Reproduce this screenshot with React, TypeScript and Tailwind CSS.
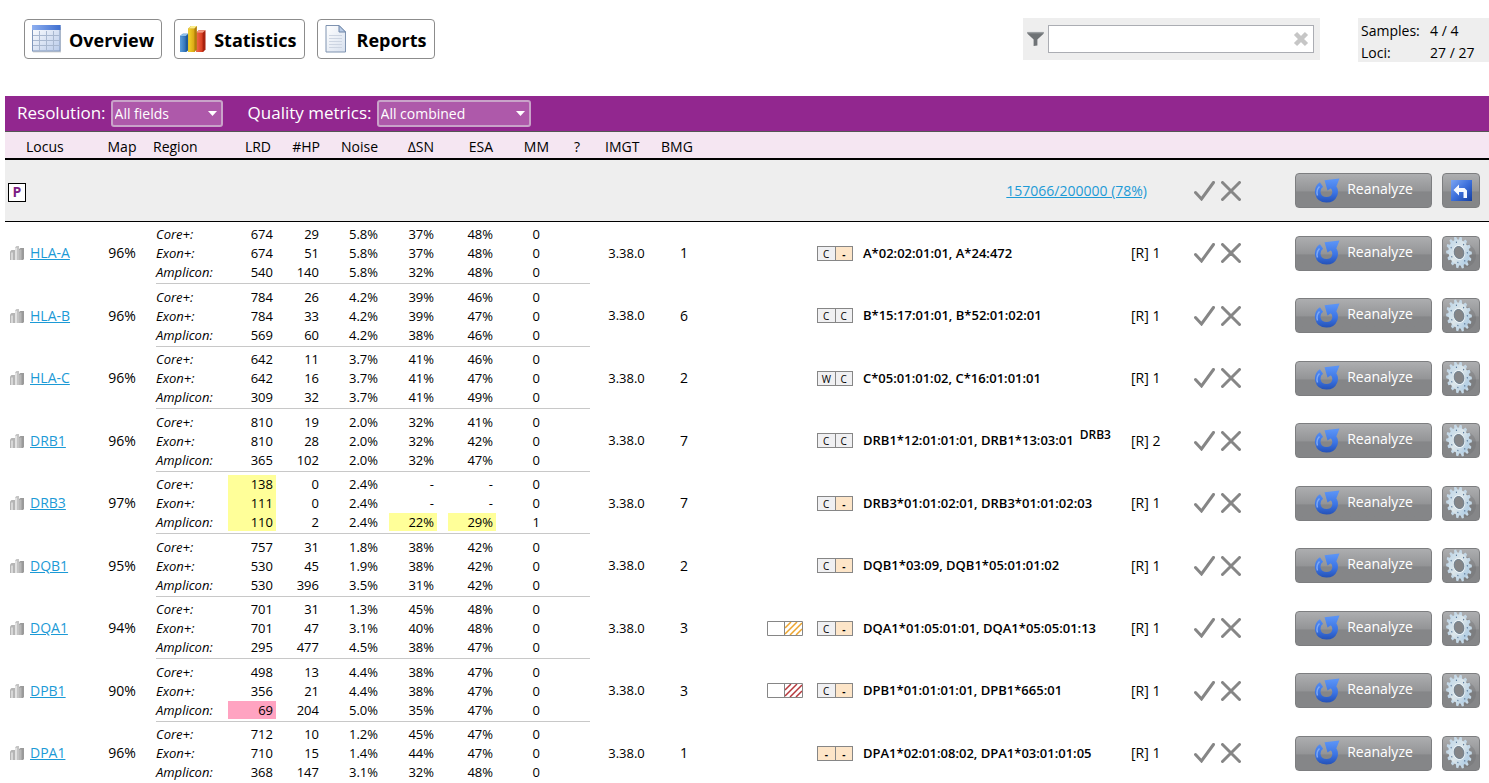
import React, { useState } from 'react';
import clsx from 'clsx';

type Flag = 'none' | 'warn' | 'fail';

interface Locus {
  name: string;
  map: string;
  lrd: string[];
  hp: string[];
  noise: string[];
  sn: string[];
  esa: string[];
  mm: string[];
  bmg: number;
  hatch?: 'orange' | 'red';
  badges: string[];
  genotype: string;
  extra?: string;
  results: number;
  flags?: { lrd?: Flag[]; sn?: Flag[]; esa?: Flag[] };
}

const REGIONS = ['Core+:', 'Exon+:', 'Amplicon:'];

const LOCI: Locus[] = [
  {
    name: 'HLA-A', map: '96%', lrd: ['674', '674', '540'], hp: ['29', '51', '140'], noise: ['5.8%', '5.8%', '5.8%'],
    sn: ['37%', '37%', '32%'], esa: ['48%', '48%', '48%'], mm: ['0', '0', '0'], bmg: 1,
    badges: ['C', '-'], genotype: 'A*02:02:01:01, A*24:472', results: 1,
  },
  {
    name: 'HLA-B', map: '96%', lrd: ['784', '784', '569'], hp: ['26', '33', '60'], noise: ['4.2%', '4.2%', '4.2%'],
    sn: ['39%', '39%', '38%'], esa: ['46%', '47%', '46%'], mm: ['0', '0', '0'], bmg: 6,
    badges: ['C', 'C'], genotype: 'B*15:17:01:01, B*52:01:02:01', results: 1,
  },
  {
    name: 'HLA-C', map: '96%', lrd: ['642', '642', '309'], hp: ['11', '16', '32'], noise: ['3.7%', '3.7%', '3.7%'],
    sn: ['41%', '41%', '41%'], esa: ['46%', '47%', '49%'], mm: ['0', '0', '0'], bmg: 2,
    badges: ['W', 'C'], genotype: 'C*05:01:01:02, C*16:01:01:01', results: 1,
  },
  {
    name: 'DRB1', map: '96%', lrd: ['810', '810', '365'], hp: ['19', '28', '102'], noise: ['2.0%', '2.0%', '2.0%'],
    sn: ['32%', '32%', '32%'], esa: ['41%', '42%', '47%'], mm: ['0', '0', '0'], bmg: 7,
    badges: ['C', 'C'], genotype: 'DRB1*12:01:01:01, DRB1*13:03:01', extra: 'DRB3', results: 2,
  },
  {
    name: 'DRB3', map: '97%', lrd: ['138', '111', '110'], hp: ['0', '0', '2'], noise: ['2.4%', '2.4%', '2.4%'],
    sn: ['-', '-', '22%'], esa: ['-', '-', '29%'], mm: ['0', '0', '1'], bmg: 7,
    badges: ['C', '-'], genotype: 'DRB3*01:01:02:01, DRB3*01:01:02:03', results: 1,
    flags: { lrd: ['warn', 'warn', 'warn'], sn: ['none', 'none', 'warn'], esa: ['none', 'none', 'warn'] },
  },
  {
    name: 'DQB1', map: '95%', lrd: ['757', '530', '530'], hp: ['31', '45', '396'], noise: ['1.8%', '1.9%', '3.5%'],
    sn: ['38%', '38%', '31%'], esa: ['42%', '42%', '42%'], mm: ['0', '0', '0'], bmg: 2,
    badges: ['C', '-'], genotype: 'DQB1*03:09, DQB1*05:01:01:02', results: 1,
  },
  {
    name: 'DQA1', map: '94%', lrd: ['701', '701', '295'], hp: ['31', '47', '477'], noise: ['1.3%', '3.1%', '4.5%'],
    sn: ['45%', '40%', '38%'], esa: ['48%', '48%', '47%'], mm: ['0', '0', '0'], bmg: 3, hatch: 'orange',
    badges: ['C', '-'], genotype: 'DQA1*01:05:01:01, DQA1*05:05:01:13', results: 1,
  },
  {
    name: 'DPB1', map: '90%', lrd: ['498', '356', '69'], hp: ['13', '21', '204'], noise: ['4.4%', '4.4%', '5.0%'],
    sn: ['38%', '38%', '35%'], esa: ['47%', '47%', '47%'], mm: ['0', '0', '0'], bmg: 3, hatch: 'red',
    badges: ['C', '-'], genotype: 'DPB1*01:01:01:01, DPB1*665:01', results: 1,
    flags: { lrd: ['none', 'none', 'fail'] },
  },
  {
    name: 'DPA1', map: '96%', lrd: ['712', '710', '368'], hp: ['10', '15', '147'], noise: ['1.2%', '1.4%', '3.1%'],
    sn: ['45%', '44%', '32%'], esa: ['47%', '47%', '48%'], mm: ['0', '0', '0'], bmg: 1,
    badges: ['-', '-'], genotype: 'DPA1*02:01:08:02, DPA1*03:01:01:05', results: 1,
  },
];

/* ---------- icons ---------- */

const GridIcon = () => (
  <svg width="31" height="28" viewBox="-2 0 31 28">
    <defs>
      <linearGradient id="gridHead" x1="0" y1="0" x2="1" y2="0">
        <stop offset="0" stopColor="#8fb0f0" />
        <stop offset="1" stopColor="#3f6fd0" />
      </linearGradient>
      <linearGradient id="gridBody" x1="0" y1="0" x2="1" y2="1">
        <stop offset="0" stopColor="#fff" />
        <stop offset="1" stopColor="#b9cbea" />
      </linearGradient>
    </defs>
    <rect x="1" y="2" width="28" height="25.500" fill="#d5d5d5" />
    <rect x=".5" y=".5" width="27.500" height="25.500" fill="url(#gridBody)" stroke="#7f97bd" />
    <rect x="0" y="0" width="28.500" height="5" fill="url(#gridHead)" />
    <path d="M7.500 6v20M14.500 6v20M21.500 6v20M1 10.500h27M1 15.500h27M1 20.500h27" stroke="#a9b8d0" fill="none" />
  </svg>
);

const ChartIcon = () => (
  <svg width="26" height="28" viewBox="0 0 27 28">
    <defs>
      <linearGradient id="barBlue" x1="0" x2="1">
        <stop offset="0" stopColor="#5ea0dc" />
        <stop offset="1" stopColor="#2f6fb4" />
      </linearGradient>
      <linearGradient id="barGold" x1="0" x2="1">
        <stop offset="0" stopColor="#f3d62c" />
        <stop offset="1" stopColor="#d9a413" />
      </linearGradient>
      <linearGradient id="barRed" x1="0" x2="1">
        <stop offset="0" stopColor="#f0694a" />
        <stop offset="1" stopColor="#d63a1c" />
      </linearGradient>
    </defs>
    <path d="M0 11l3-2.500h6v17l-2.500 2H0z" fill="#235b99" />
    <path d="M0 11h6v16.500H0z" fill="url(#barBlue)" />
    <path d="M0 11l3-2.500h5.500L6 11z" fill="#8cc0ec" />
    <path d="M17 7.500L19.500 5h7v20L24 27.500h-7z" fill="#a8220e" />
    <path d="M17 7.500h6.500v20H17z" fill="url(#barRed)" />
    <path d="M17 7.500L19.500 5h7l-3 2.500z" fill="#f79a80" />
    <path d="M8.500 3L11.500.500h6V25L15 27.500H8.500z" fill="#b07f0b" />
    <path d="M8.500 3H15v24.500H8.500z" fill="url(#barGold)" />
    <path d="M8.500 3L11.500.500h6L15 3z" fill="#fbee8a" />
  </svg>
);

const DocumentIcon = () => (
  <svg width="26" height="28" viewBox="-2 0 26 28">
    <defs>
      <linearGradient id="docBody" x1="0" y1="0" x2="1" y2="1">
        <stop offset="0" stopColor="#fff" />
        <stop offset="1" stopColor="#d7e0ee" />
      </linearGradient>
    </defs>
    <path d="M1 .500h13l6.500 6.500v20H1z" fill="url(#docBody)" stroke="#7f93b0" />
    <path d="M14 .500V7h6.500z" fill="#b9cbe6" stroke="#6f86a8" />
    <path d="M4 10.500h13M4 13.500h13M4 16.500h13M4 19.500h13M4 22.500h13" stroke="#cdd5e2" />
  </svg>
);

const FunnelIcon = () => (
  <svg width="17" height="16" viewBox="0 0 18 16">
    <path d="M.500.500h17v2l-6.500 6V15l-4 .500v-7l-6.500-6z" fill="#6f7376" />
    <path d="M.500.500h17v1.500H.500z" fill="#9a9ea1" />
  </svg>
);

const ClearIcon = () => (
  <svg width="16" height="16" viewBox="0 0 16 16">
    <path d="M2.500 2.500l11 11M13.500 2.500l-11 11" stroke="#c6c6c6" strokeWidth="4.500" />
  </svg>
);

const SmallBarsIcon = () => (
  <svg width="14" height="14" viewBox="0 0 14 14" className="shrink-0">
    <path d="M0 5.500L1.500 4H5v10H0z" fill="#b5b5b5" />
    <path d="M1 6.500h2V14H1z" fill="#d8d8d8" />
    <path d="M9 3l1.500-1H14v11l-1 1H9z" fill="#9a9a9a" />
    <path d="M9 3.500h2.500V14H9z" fill="#b8b8b8" />
    <path d="M5 1.500L6.500 0H9v14H5z" fill="#c4c4c4" />
    <path d="M5 2h2v12H5z" fill="#e2e2e2" />
  </svg>
);

const CheckIcon = () => (
  <svg width="21" height="20" viewBox="0 0 21 20">
    <path d="M1.500 11.500L7.500 18 19.500 1.500" fill="none" stroke="#868686" strokeWidth="3" strokeLinecap="round" />
  </svg>
);

const CrossIcon = () => (
  <svg width="20" height="20" viewBox="0 0 20 20">
    <path d="M1.500 1.500l17 17M18.500 1.500l-17 17" stroke="#868686" strokeWidth="3" strokeLinecap="round" />
  </svg>
);

const ReloadIcon = () => (
  <svg width="26" height="26" viewBox="0 0 26 26">
    <defs>
      <linearGradient id="reload" gradientUnits="userSpaceOnUse" x1="0" y1="2" x2="0" y2="25">
        <stop offset="0" stopColor="#5a93f5" />
        <stop offset=".55" stopColor="#3b74e4" />
        <stop offset="1" stopColor="#2450b4" />
      </linearGradient>
    </defs>
    <path d="M7.500 6.500C1.500 10.500 2.500 21.500 12.500 21.800C21 21.800 23.500 13 18.500 8" fill="none" stroke="url(#reload)" strokeWidth="5.600" />
    <path d="M10.500 2.200L25.500.500 22.500 8 18 9.500 13.500 12.500z" fill="url(#reload)" />
    <path d="M5.500 8.500C3 11 2.500 14.500 3.500 17.500" fill="none" stroke="#7fa9f3" strokeWidth="1.500" />
  </svg>
);

const BackIcon = () => (
  <svg width="21" height="21" viewBox="0 0 21 21">
    <defs>
      <linearGradient id="back" x1="0" y1="0" x2="1" y2="1">
        <stop offset="0" stopColor="#7ba5f2" />
        <stop offset=".5" stopColor="#3c6fdb" />
        <stop offset="1" stopColor="#153f9f" />
      </linearGradient>
    </defs>
    <rect width="21" height="21" fill="url(#back)" />
    <path d="M2.500 10L8 4.500v3.500h5.500l2.500 2.500V18h-3.500v-6H8v3.500z" fill="#f4f8ff" />
  </svg>
);

const TEETH = Array.from({ length: 14 }, (_, i) => (i * 360) / 14);

const GearIcon = () => (
  <svg width="34" height="34" viewBox="0 0 34 34">
    <defs>
      <linearGradient id="gear" gradientUnits="userSpaceOnUse" x1="-10" y1="-12" x2="10" y2="14">
        <stop offset="0" stopColor="#c3d9e9" />
        <stop offset=".45" stopColor="#dce6ea" />
        <stop offset="1" stopColor="#a5c6e2" />
      </linearGradient>
    </defs>
    <ellipse cx="20" cy="19.500" rx="12" ry="12" fill="#6d6e70" opacity=".35" />
    <g transform="translate(15 16.500) rotate(-14) scale(.78 1)">
      {TEETH.map(a => (
        <path key={a} d="M-2.300-12L-1.300-16.200h2.600L2.300-12z" fill="#c4d8e7" transform={`rotate(${a})`} />
      ))}
      <circle r="10" fill="none" stroke="url(#gear)" strokeWidth="6.500" />
      <circle r="7" fill="none" stroke="#eef4f7" strokeWidth="1.200" />
      <circle r="6.200" fill="#848587" stroke="#6e8496" strokeWidth=".8" />
      {TEETH.filter((_, i) => i % 2 === 0).map(a => (
        <circle key={a} cy="-10.500" r=".8" fill="#58789a" transform={`rotate(${a})`} />
      ))}
    </g>
  </svg>
);

/* ---------- small parts ---------- */

const TabButton: React.FC<{ icon: React.ReactNode; children: React.ReactNode }> = ({ icon, children }) => (
  <button
    type="button"
    className="flex h-10 items-center gap-2 rounded-[4px] border border-[#8c8c8c] bg-white pl-[5px] pr-[7px] text-lg font-bold"
  >
    {icon}
    <span className="pt-[2px]">{children}</span>
  </button>
);

interface PickerProps {
  id: string;
  label: string;
  options: string[];
  width: string;
}

const Picker: React.FC<PickerProps> = ({ id, label, options, width }) => (
  <div className="flex items-center gap-[5px]">
    <label htmlFor={id} className="text-[17px] text-white">{label}</label>
    <div className={clsx('relative', width)}>
      <select
        id={id}
        className="h-[27px] w-full appearance-none rounded-[3px] border-2 border-[#c9a3c9] bg-[#ae59aa] pl-[2px] text-sm text-white outline-none"
      >
        {options.map(o => <option key={o}>{o}</option>)}
      </select>
      <svg width="9" height="5" viewBox="0 0 9 5" className="pointer-events-none absolute right-[6px] top-[11px]">
        <path d="M0 0h9L4.500 5z" fill="#fff" />
      </svg>
    </div>
  </div>
);

const ReanalyzeButton = () => (
  <button
    type="button"
    className="flex h-[35px] w-[137px] items-center justify-center gap-[7px] rounded-[4px] border border-[#7d7e80] bg-linear-to-b from-[#adaeb0] from-0% via-[#949597] via-50% to-[#858688] to-55% text-sm text-white"
  >
    <ReloadIcon />
    <span className="pb-[3px]">Reanalyze</span>
  </button>
);

const SquareButton: React.FC<{ label: string; children: React.ReactNode }> = ({ label, children }) => (
  <button
    type="button"
    aria-label={label}
    className="flex h-[35px] w-[38px] items-center justify-center overflow-hidden rounded-[4px] border border-[#7d7e80] bg-linear-to-b from-[#adaeb0] from-0% via-[#949597] via-50% to-[#858688] to-55%"
  >
    {children}
  </button>
);

const Decision = () => (
  <div className="flex items-center gap-[6px]">
    <button type="button" aria-label="Accept"><CheckIcon /></button>
    <button type="button" aria-label="Reject"><CrossIcon /></button>
  </div>
);

const Badges: React.FC<{ values: string[] }> = ({ values }) => (
  <div className="flex h-[15px] w-9 divide-x divide-[#868686] border border-[#868686] text-[10px] leading-[14px]">
    {values.map((v, i) => (
      <span
        key={i}
        className={clsx('flex-1 text-center', v === '-' ? 'bg-[#fde5c8] font-bold' : 'bg-[#f0f0f2]')}
      >
        {v}
      </span>
    ))}
  </div>
);

const Hatch: React.FC<{ color: 'orange' | 'red' }> = ({ color }) => (
  <svg width="36" height="15" viewBox="0 0 36 15">
    <path
      d="M18 7l6-6M18 13L30 1M23 14L35 2M29 14l6-6"
      stroke={color === 'orange' ? '#eda52f' : '#b7393d'}
      strokeWidth="1.500"
    />
    <path d="M.500.500h35v14H.500zM17.500.500v14" fill="none" stroke="#868686" />
  </svg>
);

interface StackProps {
  values: string[];
  flags?: Flag[];
  className?: string;
}

// Three stacked values, one for each region
const Stack: React.FC<StackProps> = ({ values, flags, className }) => (
  <div className="border-b border-[#c8c8c8] pb-[2px] text-[13px] leading-[19px]">
    {values.map((v, i) => (
      <div
        key={i}
        className={clsx(
          'ml-auto h-[19px] last:h-[18px]',
          className ?? 'w-12 pr-[3px] text-right',
          flags?.[i] === 'warn' && 'bg-[#ffff99]',
          flags?.[i] === 'fail' && 'bg-[#ffa3c1]',
        )}
      >
        {v}
      </div>
    ))}
  </div>
);

const LocusRow: React.FC<{ locus: Locus }> = ({ locus }) => (
  <tr className="h-[62px] even:h-[63px]">
    <td>
      <div className="flex items-center gap-[6px] pl-[5px]">
        <SmallBarsIcon />
        <a href="#" className="text-[#1c9ad6] underline">{locus.name}</a>
      </div>
    </td>
    <td className="text-center">{locus.map}</td>
    <td className="pl-1 align-bottom italic"><Stack values={REGIONS} className="w-full" /></td>
    <td className="align-bottom"><Stack values={locus.lrd} flags={locus.flags?.lrd} /></td>
    <td className="align-bottom"><Stack values={locus.hp} /></td>
    <td className="align-bottom"><Stack values={locus.noise} /></td>
    <td className="align-bottom"><Stack values={locus.sn} flags={locus.flags?.sn} /></td>
    <td className="align-bottom"><Stack values={locus.esa} flags={locus.flags?.esa} /></td>
    <td className="align-bottom"><Stack values={locus.mm} className="pr-[10px] text-right" /></td>
    <td className="align-bottom"><div className="border-b border-[#c8c8c8]" /></td>
    <td className="pl-[5px] text-center text-[13px]">3.38.0</td>
    <td className="text-center">{locus.bmg}</td>
    <td>
      <div className="flex justify-end gap-[14px] pr-[10px]">
        {locus.hatch && <Hatch color={locus.hatch} />}
        <Badges values={locus.badges} />
      </div>
    </td>
    <td className="whitespace-nowrap text-[13px] font-semibold">
      {locus.genotype}
      {locus.extra && <sup className="ml-[6px] text-xs">{locus.extra}</sup>}
    </td>
    <td>[R] {locus.results}</td>
    <td><Decision /></td>
    <td><ReanalyzeButton /></td>
    <td><SquareButton label={`${locus.name} settings`}><GearIcon /></SquareButton></td>
  </tr>
);

const App: React.FC = () => {
  const [filter, setFilter] = useState('');

  return (
    <div className="min-h-screen bg-white font-['Open_Sans','Noto_Sans',sans-serif] text-sm text-black">
      <header className="flex h-24 items-start pl-6 pt-[18px]">
        <nav className="flex gap-3 pt-[1px]">
          <TabButton icon={<GridIcon />}>Overview</TabButton>
          <TabButton icon={<ChartIcon />}>Statistics</TabButton>
          <TabButton icon={<DocumentIcon />}>Reports</TabButton>
        </nav>

        <div className="ml-auto mr-[38px] flex h-[42px] w-[297px] items-center gap-1 bg-[#eee] pl-1 pr-[6px]">
          <FunnelIcon />
          <div className="relative flex-1">
            <input
              type="text"
              aria-label="Filter"
              value={filter}
              onChange={e => setFilter(e.target.value)}
              className="block h-7 w-full border border-[#abadb3] bg-white pl-1 pr-7 outline-none"
            />
            <button type="button" aria-label="Clear filter" onClick={() => setFilter('')} className="absolute right-[5px] top-[6px]">
              <ClearIcon />
            </button>
          </div>
        </div>

        <dl className="grid h-11 w-[131px] grid-cols-[69px_1fr] bg-[#eee] pl-[3px] pt-[2px] leading-[22px]">
          <dt>Samples:</dt>
          <dd>4 / 4</dd>
          <dt>Loci:</dt>
          <dd>27 / 27</dd>
        </dl>
      </header>

      <main className="ml-[5px]">
        <div className="flex h-9 items-center gap-[25px] border-b border-[#555] bg-[#92278f] pl-3">
          <Picker id="resolution" label="Resolution:" options={['All fields', 'Two fields']} width="w-[112px]" />
          <Picker id="metrics" label="Quality metrics:" options={['All combined', 'Per region']} width="w-[154px]" />
        </div>

        <table className="w-full table-fixed border-separate border-spacing-0">
          <colgroup>
            <col className="w-[87px]" />
            <col className="w-[60px]" />
            <col className="w-[76px]" />
            <col className="w-[46px]" />
            <col className="w-[46px]" />
            <col className="w-[61px]" />
            <col className="w-[56px]" />
            <col className="w-[59px]" />
            <col className="w-[54px]" />
            <col className="w-10" />
            <col className="w-[68px]" />
            <col className="w-[52px]" />
            <col className="w-[153px]" />
            <col />
            <col className="w-[63px]" />
            <col className="w-[101px]" />
            <col className="w-[147px]" />
            <col className="w-[47px]" />
          </colgroup>
          <thead>
            <tr className="h-7 bg-[#f5e6f2] text-left *:border-b-2 *:border-black *:pt-[3px] *:font-normal">
              <th className="pl-[21px]">Locus</th>
              <th className="text-center">Map</th>
              <th className="pl-[1px]">Region</th>
              <th className="pr-[3px] text-right">LRD</th>
              <th className="text-right">#HP</th>
              <th className="pr-[3px] text-right">Noise</th>
              <th className="pr-[3px] text-right">ΔSN</th>
              <th className="pr-[3px] text-right">ESA</th>
              <th className="pr-[1px] text-right">MM</th>
              <th className="pl-6">?</th>
              <th className="pl-[15px]">IMGT</th>
              <th className="pl-[3px]">BMG</th>
              <th colSpan={6} />
            </tr>
            <tr className="h-[62px] bg-[#eee] text-left *:border-b *:border-black *:font-normal">
              <th colSpan={2} className="pl-[3px] pt-[3px]">
                <span className="flex h-[19px] w-[18px] items-center justify-center border border-black bg-white font-bold text-[#7d1f85]">P</span>
              </th>
              <td colSpan={13} className="pr-[47px] text-right">
                <a href="#" className="text-[#1c9ad6] underline">157066/200000 (78%)</a>
              </td>
              <td><Decision /></td>
              <td><ReanalyzeButton /></td>
              <td><SquareButton label="Back"><BackIcon /></SquareButton></td>
            </tr>
          </thead>
          <tbody>
            {LOCI.map(l => <LocusRow key={l.name} locus={l} />)}
          </tbody>
        </table>
      </main>
    </div>
  );
};

export default App;
